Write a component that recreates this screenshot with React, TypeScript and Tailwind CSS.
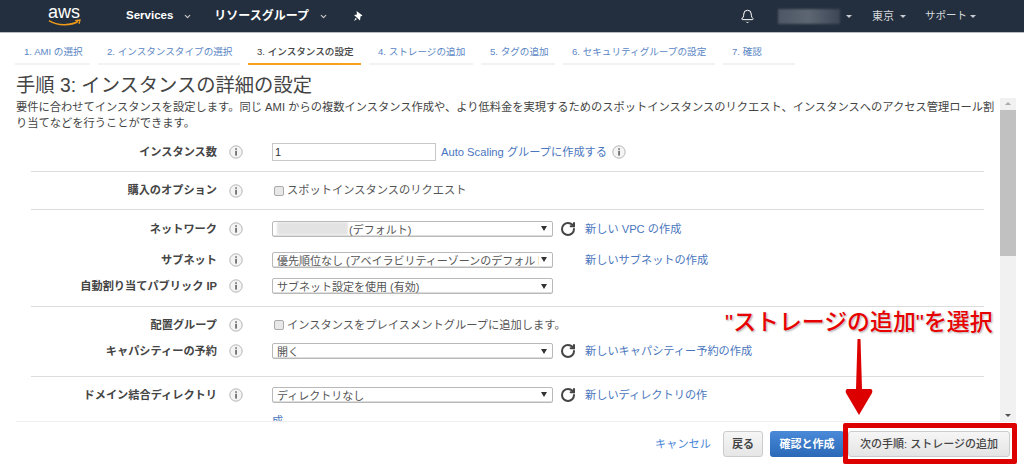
import type { ReactNode } from "react";
import { Bell, ChevronDown, RotateCw } from "lucide-react";

const tabs = [
  { label: "1. AMI の選択", width: "w-[75px]" },
  { label: "2. インスタンスタイプの選択", width: "w-[142px]" },
  { label: "3. インスタンスの設定", width: "w-[113px]", active: true },
  { label: "4. ストレージの追加", width: "w-[104px]" },
  { label: "5. タグの追加", width: "w-[74px]" },
  { label: "6. セキュリティグループの設定", width: "w-[152px]" },
  { label: "7. 確認", width: "w-[72px]" },
];

function Caret() {
  return <span className="ml-[6px] inline-block h-0 w-0 border-x-[3px] border-t-[3px] border-x-transparent border-t-[#c8ccd2]" />;
}

function Info() {
  return (
    <svg viewBox="0 0 14 14" className="h-[14px] w-[14px] shrink-0">
      <circle cx="7" cy="7" r="6.2" fill="#f4f4f4" stroke="#b5b5b5" strokeWidth="1" />
      <rect x="6.3" y="5.8" width="1.5" height="4.8" fill="#555" />
      <rect x="6.3" y="3.3" width="1.5" height="1.5" fill="#555" />
    </svg>
  );
}

function Row({ label, height, children }: { label?: string; height: string; children?: ReactNode }) {
  return (
    <div className={`flex items-center ${height}`}>
      <div className="w-[217px] shrink-0 text-right text-[11.2px] font-bold text-[#444]">{label}</div>
      <div className="flex w-[55px] shrink-0 pl-[12px]">{label && <Info />}</div>
      <div className="flex min-w-0 flex-1 items-center text-[11px] text-[#555]">{children}</div>
    </div>
  );
}

function Select({ text, blur }: { text: string; blur?: boolean }) {
  return (
    <div className="flex h-[16px] w-[281px] shrink-0 items-center overflow-hidden rounded-[2px] border border-[#b9b9b9] bg-white pl-[4px] pr-[5px] shadow-[inset_0_-1px_0_#ddd]">
      {blur && <span className="mr-[1px] h-[13px] w-[71px] shrink-0 bg-[#e3e3e3] blur-[1px]" />}
      <span className="min-w-0 flex-1 overflow-hidden whitespace-nowrap pt-[2px] text-[11px] text-[#555]">{text}</span>
      <span className="ml-[2px] h-0 w-0 shrink-0 border-x-[3px] border-t-[5px] border-x-transparent border-t-[#333]" />
    </div>
  );
}

function Refresh() {
  return <RotateCw size={16} strokeWidth={3} className="ml-[7px] mr-[9px] shrink-0 text-[#444]" />;
}

function Check({ text }: { text: string }) {
  return (
    <span className="flex items-center pl-[2px]">
      <span className="mr-[3px] h-[10px] w-[10px] rounded-[2px] border border-[#aaa] bg-[#e8e8e8]" />
      <span className="text-[11.25px] text-[#555]">{text}</span>
    </span>
  );
}

function Link({ children }: { children: ReactNode }) {
  return <span className="whitespace-nowrap text-[11.2px] text-[#4a76bd]">{children}</span>;
}

function Divider() {
  return <div className="ml-[31px] mr-[16px] h-[1px] bg-[#dcdcdc]" />;
}

export default function App() {
  return (
    <div
      className="relative flex h-[472px] w-[1024px] flex-col overflow-hidden bg-white"
      style={{ fontFamily: '"Liberation Sans","Noto Sans CJK JP",sans-serif' }}
    >
      <header className="flex h-[33px] shrink-0 items-center border-b border-[#b8bcc2] bg-[#232f3e] text-white">
        <div className="ml-[48px] flex w-[78px] flex-col">
          <span className="text-[18px] leading-[14px] text-white">aws</span>
          <svg viewBox="0 0 34 8" className="h-[8px] w-[33px]">
            <path d="M1 1.5C10 7 23 7 31 2.5" fill="none" stroke="#f09a1a" strokeWidth="1.6" />
            <path d="M28 1.5L33 1L32 5" fill="none" stroke="#f09a1a" strokeWidth="1.3" />
          </svg>
        </div>
        <span className="text-[11.5px] font-bold">Services</span>
        <ChevronDown size={9} strokeWidth={3} className="ml-[10px] text-[#ccc]" />
        <span className="ml-[22px] text-[12px] font-bold">リソースグループ</span>
        <ChevronDown size={9} strokeWidth={3} className="ml-[10px] text-[#ccc]" />
        <svg viewBox="0 0 12 12" className="ml-[24px] h-[12px] w-[12px]">
          <path d="M4.5 1L10.5 5.5L8.5 6.5L8 10.5L2 5L5 4.5Z M3.5 8L2 11L5 9Z" fill="#fff" />
        </svg>
        <Bell size={15} strokeWidth={1.6} className="ml-auto text-white" />
        <span className="ml-[23px] h-[15px] w-[62px] bg-[linear-gradient(90deg,#4d5765,#5d6672,#3c4756)] blur-[1px]" />
        <Caret />
        <span className="ml-[20px] text-[11px] text-[#d5d8dc]">東京</span>
        <Caret />
        <span className="ml-[19px] text-[10.5px] text-[#d5d8dc]">サポート</span>
        <span className="ml-[3px] mr-[48px] inline-block h-0 w-0 border-x-[3px] border-t-[3px] border-x-transparent border-t-[#c8ccd2]" />
      </header>

      <nav className="flex shrink-0 gap-[8px] pl-[15px] pt-[7px]">
        {tabs.map((t) => (
          <div
            key={t.label}
            className={`flex h-[25px] items-center whitespace-nowrap border-b-[2px] pl-[9px] pt-[1px] text-[9.6px] ${t.width} ${
              t.active ? "border-[#f7a11f] font-medium text-[#444]" : "border-[#f2f2f2] text-[#5b87c5]"
            }`}
          >
            {t.label}
          </div>
        ))}
      </nav>

      <h1 className="h-[33px] shrink-0 pl-[16px] pt-[9px] text-[19.3px] font-normal leading-[24px] text-[#444]">
        手順 3: インスタンスの詳細の設定
      </h1>

      <div className="flex min-h-0 flex-1">
        <div className="min-w-0 flex-1 overflow-hidden">
          <p className="h-[35px] pl-[16px] pr-[4px] pt-[1px] text-[11.25px] leading-[16px] text-[#444]">
            要件に合わせてインスタンスを設定します。同じ AMI からの複数インスタンス作成や、より低料金を実現するためのスポットインスタンスのリクエスト、インスタンスへのアクセス管理ロール割り当てなどを行うことができます。
          </p>
          <Row label="インスタンス数" height="h-[38px]">
            <div className="flex h-[18px] w-[164px] items-center border border-[#c8c8c8] pl-[2px] text-[11px] text-[#333]">1</div>
            <span className="ml-[5px] text-[11.2px] text-[#4a76bd]">Auto Scaling グループに作成する</span>
            <span className="ml-[5px] flex"><Info /></span>
          </Row>
          <Divider />
          <Row label="購入のオプション" height="h-[37px]">
            <Check text="スポットインスタンスのリクエスト" />
          </Row>
          <Divider />
          <Row label="ネットワーク" height="h-[38px]">
            <Select text="(デフォルト)" blur />
            <Refresh />
            <Link>新しい VPC の作成</Link>
          </Row>
          <Row label="サブネット" height="h-[24px]">
            <Select text="優先順位なし (アベイラビリティーゾーンのデフォルト)" />
            <span className="ml-[32px]"><Link>新しいサブネットの作成</Link></span>
          </Row>
          <Row label="自動割り当てパブリック IP" height="h-[28px]">
            <Select text="サブネット設定を使用 (有効)" />
          </Row>
          <div className="h-[6px]" />
          <Divider />
          <Row label="配置グループ" height="h-[36px]">
            <Check text="インスタンスをプレイスメントグループに追加します。" />
          </Row>
          <Row label="キャパシティーの予約" height="h-[16px]">
            <Select text="開く" />
            <Refresh />
            <Link>新しいキャパシティー予約の作成</Link>
          </Row>
          <div className="h-[17px]" />
          <Divider />
          <Row label="ドメイン結合ディレクトリ" height="h-[36px]">
            <Select text="ディレクトリなし" />
            <Refresh />
            <Link>新しいディレクトリの作</Link>
          </Row>
          <Row height="h-[16px]">
            <Link>成</Link>
          </Row>
        </div>
        <div className="flex w-[16px] shrink-0 flex-col items-center bg-[#f1f1f1]">
          <span className="mt-[4px] h-0 w-0 border-x-[3px] border-b-[3px] border-x-transparent border-b-[#aaa]" />
          <div className="mt-[5px] h-[146px] w-full bg-[#c1c1c1]" />
          <span className="mb-[4px] mt-auto h-0 w-0 border-x-[3px] border-t-[3px] border-x-transparent border-t-[#505050]" />
        </div>
        <div className="w-[8px] shrink-0" />
      </div>

      <footer className="ml-[16px] mr-[8px] flex h-[51px] shrink-0 items-start justify-end border-t border-[#eee] pr-[6px] pt-[9px]">
        <span className="mt-[5px] text-[11.2px] text-[#4a86d8]">キャンセル</span>
        <button className="ml-[12px] h-[26px] w-[40px] rounded-[3px] border border-[#ccc] bg-[linear-gradient(#f6f6f6,#e6e6e6)] text-[11px] font-bold text-[#444]">戻る</button>
        <button className="ml-[7px] h-[26px] w-[74px] rounded-[3px] bg-[linear-gradient(#4a8ad8,#2a68b8)] text-[11px] font-bold text-white">確認と作成</button>
        <button className="ml-[4px] h-[26px] w-[162px] rounded-[3px] border border-[#ccc] bg-[linear-gradient(#f6f6f6,#e4e4e4)] text-[11px] font-medium text-[#444]">次の手順: ストレージの追加</button>
      </footer>

      {/* 注釈: 赤枠・矢印・テキストは画面の上に重ねる */}
      <div className="absolute left-[843px] top-[423px] h-[41px] w-[174px] rounded-[2px] border-[5px] border-[#dd0000]" />
      <span className="absolute left-[725px] top-[307px] whitespace-nowrap text-[22.9px] font-medium leading-[30px] text-[#e60000] [text-shadow:0_0_2px_#fff,1px_1px_2px_#999]">
        "ストレージの追加"を選択
      </span>
      <svg viewBox="0 0 30 80" className="absolute left-[844px] top-[339px] h-[80px] w-[30px]">
        <path d="M13.5 0L16.5 0L18 50L27 50Q29 51 28 54L15 76L2 54Q1 51 3 50L12 50Z" fill="#dd0000" />
      </svg>
    </div>
  );
}
